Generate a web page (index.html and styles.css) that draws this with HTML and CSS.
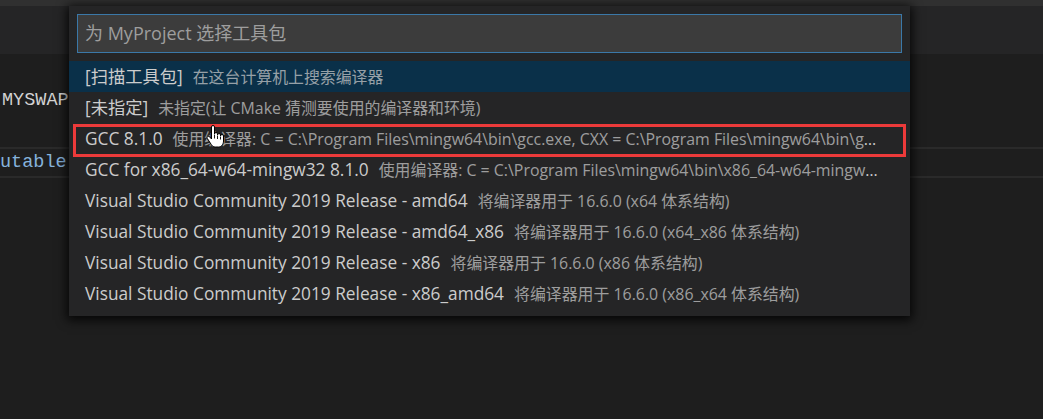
FILE: index.html
```html
<!DOCTYPE html>
<html lang="zh-CN">
<head>
<meta charset="utf-8">
<title>Select kit</title>
<link rel="stylesheet" href="styles.css">
</head>
<body>
<div class="window">
  <div class="top-strip"></div>
  <div class="tab-band"></div>
  <div class="editor">
    <div class="line"></div>
    <div class="line"><span class="tok-plain">MYSWAP</span></div>
    <div class="line"></div>
    <div class="line current"><span class="tok-fn">utable</span></div>
  </div>

  <div class="quickpick">
    <div class="input">为 MyProject 选择工具包</div>
    <div class="list">
      <div class="row selected"><span class="label">[扫描工具包]</span><span class="desc">在这台计算机上搜索编译器</span></div>
      <div class="row"><span class="label">[未指定]</span><span class="desc">未指定(让 CMake 猜测要使用的编译器和环境)</span></div>
      <div class="row"><span class="label">GCC 8.1.0</span><span class="desc">使用编译器: C = C:\Program Files\mingw64\bin\gcc.exe, CXX = C:\Program Files\mingw64\bin\g++.exe</span></div>
      <div class="row"><span class="label">GCC for x86_64-w64-mingw32 8.1.0</span><span class="desc">使用编译器: C = C:\Program Files\mingw64\bin\x86_64-w64-mingw32-gcc.exe</span></div>
      <div class="row"><span class="label">Visual Studio Community 2019 Release - amd64</span><span class="desc">将编译器用于 16.6.0 (x64 体系结构)</span></div>
      <div class="row"><span class="label">Visual Studio Community 2019 Release - amd64_x86</span><span class="desc">将编译器用于 16.6.0 (x64_x86 体系结构)</span></div>
      <div class="row"><span class="label">Visual Studio Community 2019 Release - x86</span><span class="desc">将编译器用于 16.6.0 (x86 体系结构)</span></div>
      <div class="row"><span class="label">Visual Studio Community 2019 Release - x86_amd64</span><span class="desc">将编译器用于 16.6.0 (x86_x64 体系结构)</span></div>
    </div>
  </div>

  <div class="highlight-box"></div>

  <svg class="cursor" width="19" height="23" viewBox="0 0 19 23" aria-hidden="true">
    <path d="M5.5 2a1.5 1.5 0 0 1 3 0V9a1.5 1.5 0 0 1 3 0v1a1.5 1.5 0 0 1 3 0v1a1.5 1.5 0 0 1 3 0V16c0 3.2-2 6-4.8 6H9.2c-1.9 0-3-1-4-2.6L1.4 13.6a1.4 1.4 0 0 1 2.3-1.7L5.5 14Z" fill="#fff" stroke="#000" stroke-width="1" stroke-linejoin="round"/>
    <path d="M8.5 9.5v4M11.5 10.5v3.5M14.5 11.5v3" stroke="#000" stroke-width="0.9" fill="none"/>
  </svg>
</div>
</body>
</html>
```

FILE: styles.css
```css
html, body {
  margin: 0;
  padding: 0;
  background: #1e1e1e;
}

.window {
  position: relative;
  width: 1043px;
  height: 419px;
  overflow: hidden;
  background: #1e1e1e;
  font-family: "Open Sans", "Noto Sans CJK SC", sans-serif;
}

.top-strip {
  height: 6px;
  background: #303030;
}

.tab-band {
  height: 48px;
  background: #252526;
}

.editor {
  font-family: "Liberation Mono", monospace;
  font-size: 18.5px;
}

.line {
  height: 31px;
  line-height: 31px;
  white-space: pre;
  padding-left: 2px;
  box-sizing: border-box;
}

.line.current {
  border-top: 2px solid #2a2a2a;
  border-bottom: 2px solid #2a2a2a;
  line-height: 27px;
}

.tok-plain { color: #d2d2d2; }
.tok-fn { color: #86b3dc; margin-left: -2px; }

.quickpick {
  position: absolute;
  left: 69px;
  top: 6px;
  width: 841px;
  box-sizing: border-box;
  padding: 8px 0 7px;
  background: #252526;
  box-shadow: 0 2px 10px 2px rgba(0, 0, 0, 0.85);
}

.input {
  margin: 0 8px;
  height: 39px;
  box-sizing: border-box;
  border: 1px solid #3b78a8;
  background: #3c3c3c;
  color: #9e9e9e;
  font-size: 18px;
  line-height: 37px;
  padding-left: 7px;
}

.list {
  margin-top: 8px;
}

.row {
  height: 31px;
  line-height: 31px;
  padding: 0 28px 0 16px;
  white-space: nowrap;
  overflow: hidden;
  text-overflow: ellipsis;
  color: #cccccc;
}

.row.selected {
  background: #0a3049;
}

.label {
  font-size: 17.3px;
  color: #cccccc;
}

.desc {
  font-size: 15.9px;
  margin-left: 10px;
  color: #cccccc;
  opacity: 0.72;
}

.highlight-box {
  position: absolute;
  left: 73px;
  top: 124px;
  width: 833px;
  height: 33px;
  box-sizing: border-box;
  border: 3px solid #ec3a3a;
}

.cursor {
  position: absolute;
  left: 206px;
  top: 125px;
}
```
